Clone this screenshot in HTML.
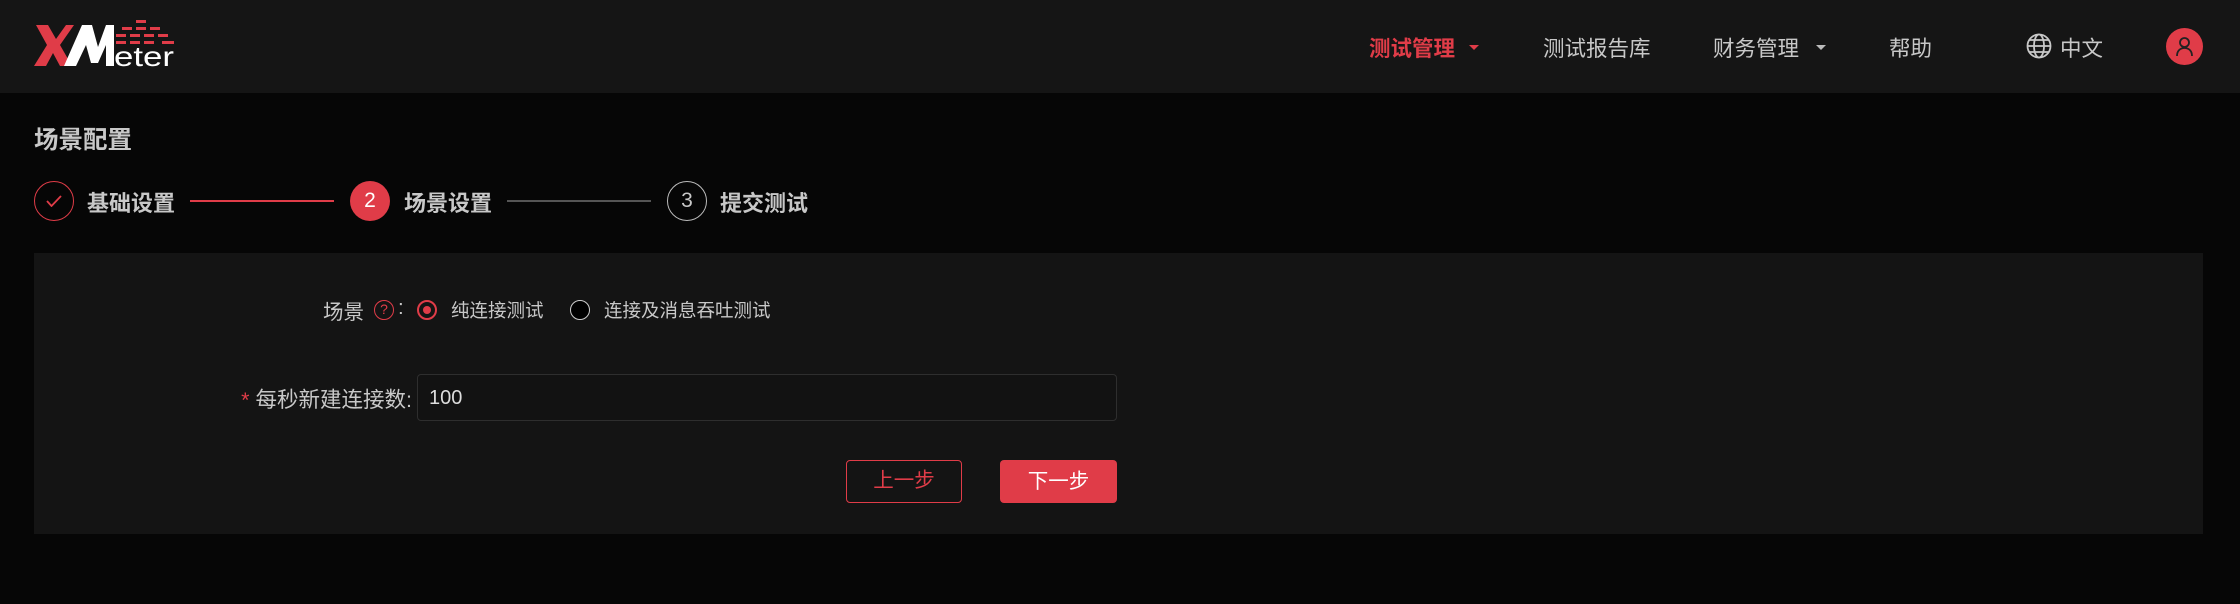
<!DOCTYPE html>
<html><head><meta charset="utf-8"><style>
*{margin:0;padding:0;box-sizing:border-box}
body{width:2240px;height:604px;background:#060606;font-family:"Liberation Sans","Noto Sans CJK SC",sans-serif;color:#c8c8c8;position:relative;overflow:hidden}
.a{position:absolute;white-space:nowrap}
.hdr{position:absolute;left:0;top:0;width:2240px;height:93px;background:#151515}
.nav{font-size:21.5px;top:32px;color:#c8c8c8}
.car{width:0;height:0;border-left:5px solid transparent;border-right:5px solid transparent;border-top:5px solid #bbb;top:45px}
.circ{width:40px;height:40px;border-radius:50%;top:181px;text-align:center;line-height:38px;font-size:21px}
.st{font-size:22px;font-weight:bold;top:186px;color:#c8c8c8}
.panel{position:absolute;left:34px;top:253px;width:2169px;height:281px;background:#141414}
.lbl{font-size:20.5px;color:#c8c8c8}
</style></head><body>
<div class="hdr"></div>
<svg class="a" style="left:34px;top:17px" width="142" height="52" viewBox="0 0 142 52">
<polygon points="2,8 14,8 22,22 32,8 40,8 26,28 38,49 26,49 19,36 12,49 0,49 13,28" fill="#e03c48"/>
<polygon points="30,49 48,8 58,8 64,30 72,8 80,8 80,49 72,49 72,28 64,46 57,46 52,28 42,49" fill="#fff"/>
<g fill="#e03c48"><rect x="102" y="3" width="10" height="3"/><rect x="88" y="10" width="10" height="3"/><rect x="102" y="10" width="10" height="3"/><rect x="116" y="10" width="10" height="3"/><rect x="82" y="17" width="10" height="3"/><rect x="96" y="17" width="10" height="3"/><rect x="110" y="17" width="10" height="3"/><rect x="124" y="17" width="10" height="3"/><rect x="82" y="24" width="10" height="3"/><rect x="96" y="24" width="10" height="3"/><rect x="110" y="24" width="10" height="3"/><rect x="128" y="24" width="12" height="3"/></g>
<text x="80" y="49" fill="#fff" font-family="Liberation Sans" font-size="28" textLength="60" lengthAdjust="spacingAndGlyphs">eter</text>
</svg>
<div class="a nav" style="left:1369px;color:#e03c48;font-weight:bold">测试管理</div>
<div class="a car" style="left:1469px;border-top-color:#e03c48"></div>
<div class="a nav" style="left:1543px">测试报告库</div>
<div class="a nav" style="left:1713px">财务管理</div>
<div class="a car" style="left:1816px"></div>
<div class="a nav" style="left:1889px">帮助</div>
<svg class="a" style="left:2026px;top:33px" width="26" height="26" viewBox="0 0 26 26" fill="none" stroke="#c8c8c8" stroke-width="1.8"><circle cx="13" cy="13" r="11.5"/><ellipse cx="13" cy="13" rx="5" ry="11.5"/><line x1="1.5" y1="13" x2="24.5" y2="13"/><path d="M3.5 7h19M3.5 19h19"/></svg>
<div class="a nav" style="left:2060px">中文</div>
<div class="a" style="left:2166px;top:28px;width:37px;height:37px;border-radius:50%;background:#e03c48"></div>
<svg class="a" style="left:2175px;top:36px" width="19" height="21" viewBox="0 0 19 21" fill="none" stroke="#222" stroke-width="1.8"><circle cx="9.5" cy="6.5" r="4.5"/><path d="M2 20c0-5 3-8 7.5-8s7.5 3 7.5 8"/></svg>

<div class="a" style="left:34px;top:121px;font-size:24.5px;font-weight:bold;color:#c8c8c8">场景配置</div>
<div class="a circ" style="left:34px;border:1.5px solid #e03c48"></div>
<svg class="a" style="left:46px;top:195px" width="16" height="12" viewBox="0 0 16 12" fill="none" stroke="#e03c48" stroke-width="1.8"><path d="M1 6l4.5 5L15 1"/></svg>
<div class="a st" style="left:87px">基础设置</div>
<div class="a" style="left:190px;top:200px;width:144px;height:2px;background:#e03c48"></div>
<div class="a circ" style="left:350px;background:#e03c48;color:#fff;line-height:40px">2</div>
<div class="a st" style="left:404px">场景设置</div>
<div class="a" style="left:507px;top:200px;width:144px;height:2px;background:#555"></div>
<div class="a circ" style="left:667px;border:1.5px solid #bbb;color:#c8c8c8">3</div>
<div class="a st" style="left:720px">提交测试</div>

<div class="panel"></div>
<div class="a lbl" style="left:323px;top:295px">场景</div>
<div class="a" style="left:374px;top:300px;width:20px;height:20px;border-radius:50%;border:1.5px solid #e03c48;color:#e03c48;font-size:14px;text-align:center;line-height:17px">?</div>
<div class="a lbl" style="left:398px;top:296px">:</div>
<div class="a" style="left:417px;top:300px;width:20px;height:20px;border-radius:50%;border:2px solid #e03c48"></div>
<div class="a" style="left:423px;top:306px;width:8px;height:8px;border-radius:50%;background:#e03c48"></div>
<div class="a" style="left:451px;top:297px;font-size:18.5px">纯连接测试</div>
<div class="a" style="left:570px;top:300px;width:20px;height:20px;border-radius:50%;border:1.5px solid #ccc;background:#000"></div>
<div class="a" style="left:604px;top:297px;font-size:18.5px">连接及消息吞吐测试</div>

<div class="a lbl" style="left:200px;width:212px;text-align:right;top:383px;font-size:21.5px"><span style="color:#e03c48">*</span> 每秒新建连接数:</div>
<div class="a" style="left:417px;top:374px;width:700px;height:47px;border:1px solid #2e2e2e;border-radius:4px;background:#121212"></div>
<div class="a" style="left:429px;top:387px;font-size:20px;color:#ddd">100</div>
<div class="a" style="left:846px;top:460px;width:116px;height:43px;border:1.5px solid #e03c48;border-radius:4px;color:#e03c48;font-size:20.5px;text-align:center;line-height:40px">上一步</div>
<div class="a" style="left:1000px;top:460px;width:117px;height:43px;background:#e03c48;border-radius:4px;color:#fff;font-size:20.5px;text-align:center;line-height:43px">下一步</div>
</body></html>
